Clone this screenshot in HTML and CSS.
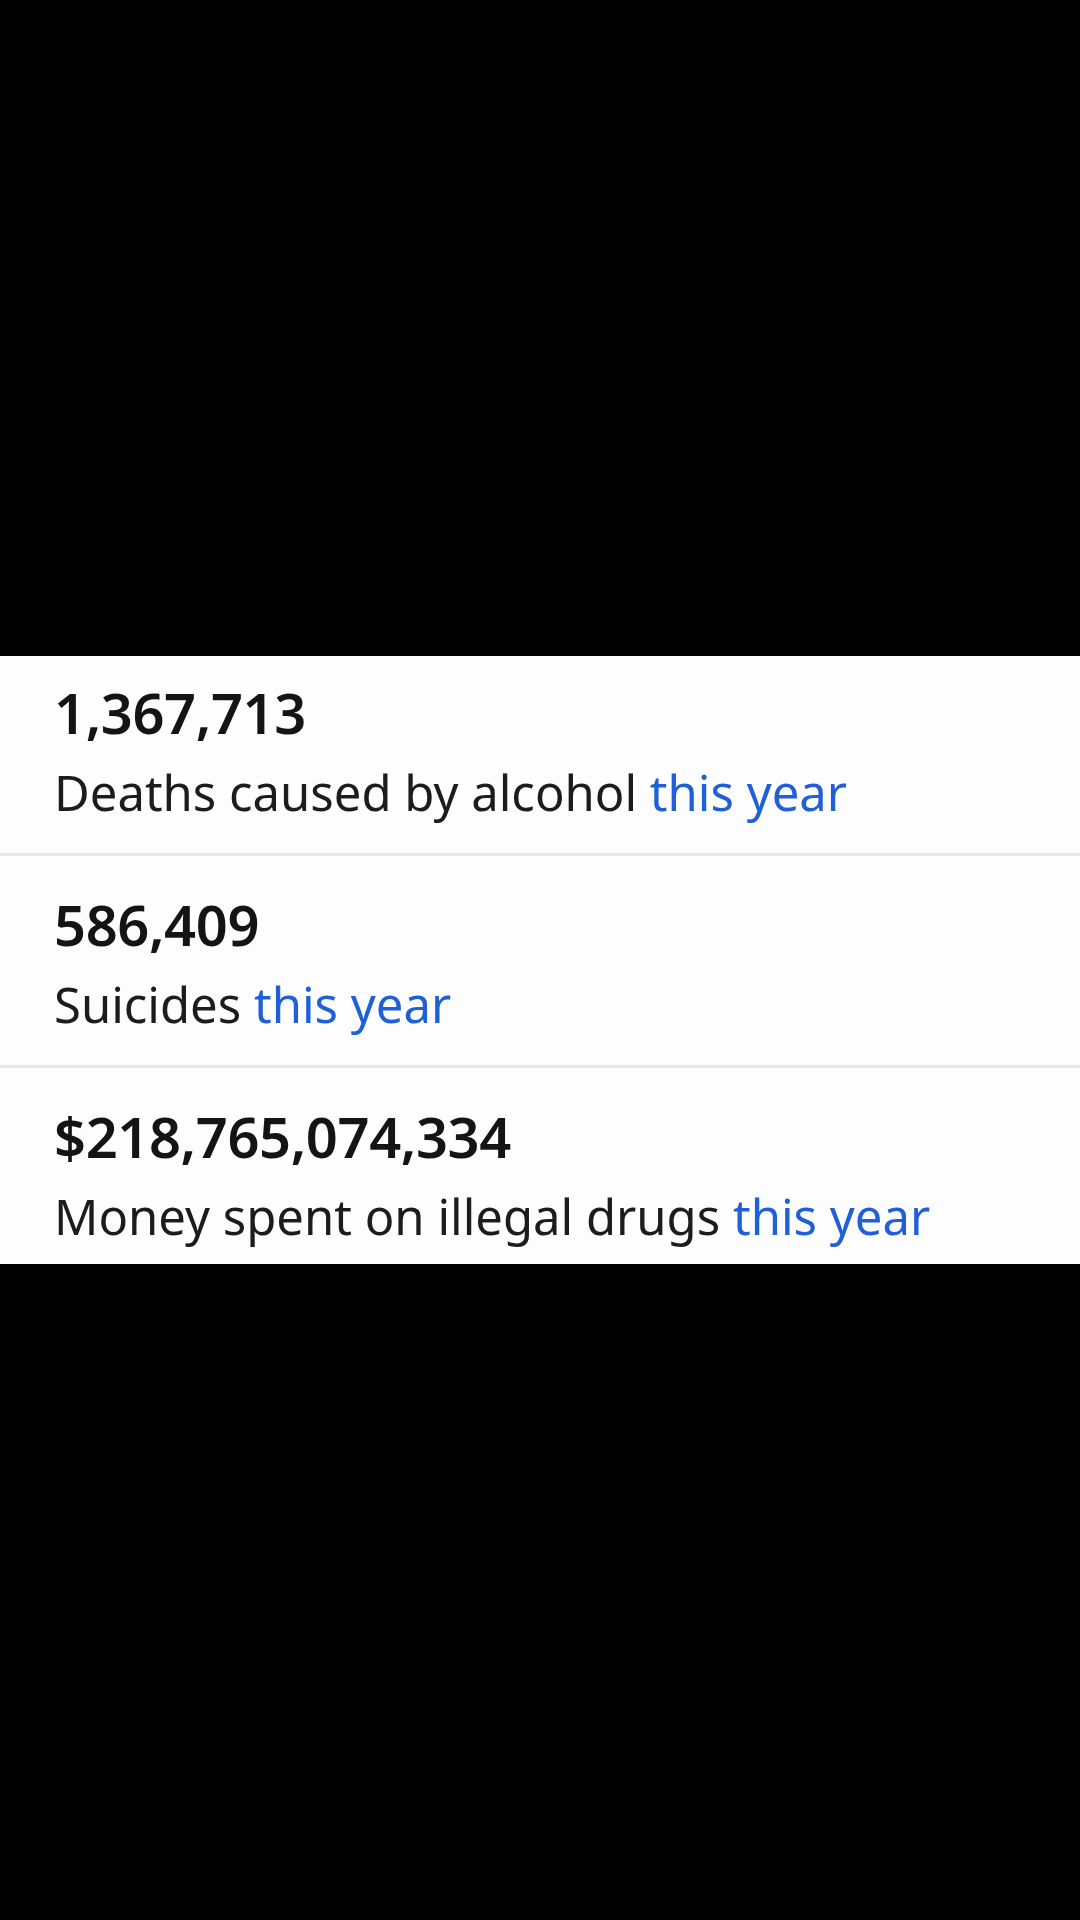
FILE: index.html
```html
<!DOCTYPE html>
<html lang="en">
<head>
<meta charset="UTF-8">
<meta name="viewport" content="width=device-width, initial-scale=1.0">
<title>World Counters</title>
<link rel="stylesheet" href="styles.css">
</head>
<body>

<div class="panel">
    <div class="list">

        <div class="row">
            <div class="count">1,367,713</div>
            <div class="label">Deaths caused by alcohol <span class="period">this year</span></div>
        </div>

        <div class="row">
            <div class="count">586,409</div>
            <div class="label">Suicides <span class="period">this year</span></div>
        </div>

        <div class="row">
            <div class="count">$218,765,074,334</div>
            <div class="label">Money spent on illegal drugs <span class="period">this year</span></div>
        </div>

    </div>
</div>

</body>
</html>
```

FILE: styles.css
```css
*{
    margin:0;
    padding:0;
    box-sizing:border-box;
}

body{
    background:#000;
    width:1080px;
    height:1920px;
    padding-top:656px;
    font-family:"Noto Sans","Open Sans",sans-serif;
}

.panel{
    background:#fdfdfd;
    height:608px;
    overflow:hidden;
}

.list{
    margin-top:-12px;
}

.row{
    height:212px;
    padding:33px 54px 0;
    border-bottom:3px solid #e6e6e8;
}

.count{
    font-size:56px;
    font-weight:600;
    color:#141414;
    line-height:70px;
    letter-spacing:-0.4px;
}

.label{
    margin-top:12px;
    font-size:49px;
    color:#1c1c1c;
    line-height:66px;
}

.period{
    color:#1f5fd8;
}
```
